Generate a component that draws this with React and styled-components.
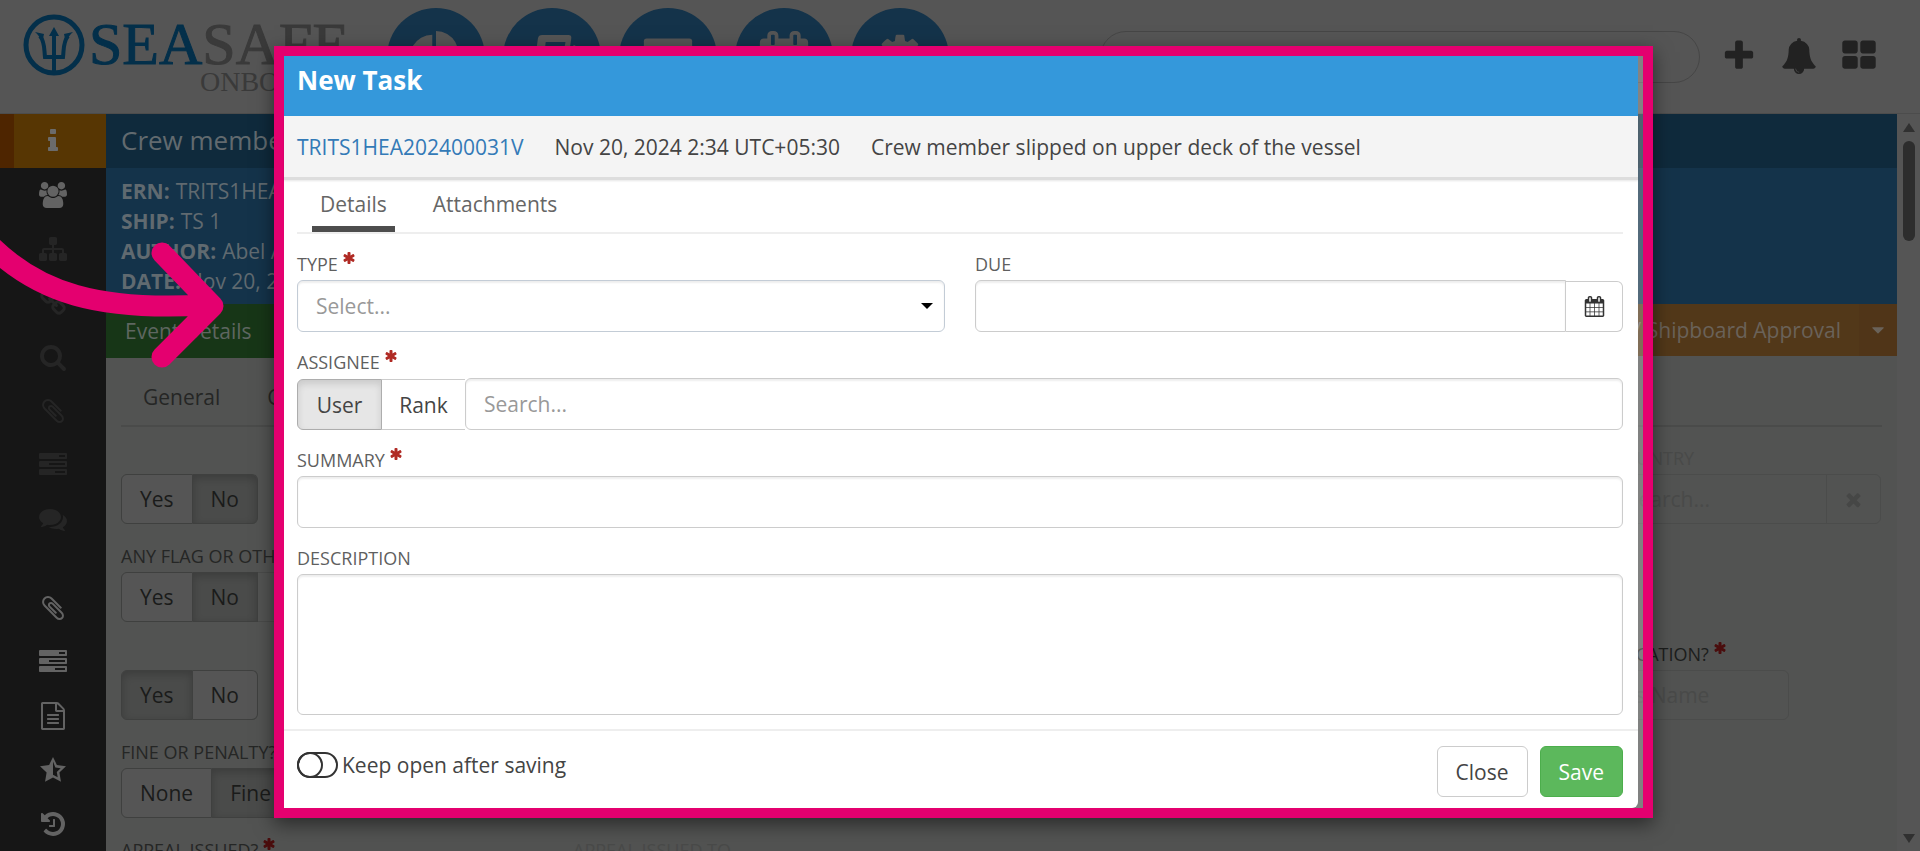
import React from "react";
import styled, { createGlobalStyle, css } from "styled-components";

const PINK = "#e4006f";

const ICONS = {
  info: "M1216 1344v128q0 26-19 45t-45 19h-512q-26 0-45-19t-19-45v-128q0-26 19-45t45-19h64v-384h-64q-26 0-45-19t-19-45v-128q0-26 19-45t45-19h384q26 0 45 19t19 45v576h64q26 0 45 19t19 45zm-128-1152v192q0 26-19 45t-45 19h-256q-26 0-45-19t-19-45v-192q0-26 19-45t45-19h256q26 0 45 19t19 45z",
  users: "M529 896q-162 5-265 128h-134q-82 0-138-40.5t-56-118.5q0-353 124-353 6 0 43.5 21t97.5 42.5 119 21.5q67 0 133-23-5 37-5 66 0 139 81 256zm1071 637q0 120-73 189.5t-194 69.5h-874q-121 0-194-69.5t-73-189.5q0-53 3.5-103.5t14-109 26.500-108.500 43-97.500 62-81 85.500-53.500 111.500-20q10 0 43 21.500t73 48 107 48 135 21.500 135-21.500 107-48 73-48 43-21.500q61 0 111.500 20t85.500 53.500 62 81 43 97.500 26.500 108.500 14 109 3.500 103.500zm-1024-1277q0 106-75 181t-181 75-181-75-75-181 75-181 181-75 181 75 75 181zm704 384q0 159-112.500 271.500t-271.500 112.500-271.500-112.500-112.500-271.500 112.500-271.500 271.500-112.500 271.500 112.500 112.500 271.500zm576 225q0 78-56 118.500t-138 40.500h-134q-103-123-265-128 81-117 81-256 0-29-5-66 66 23 133 23 59 0 119-21.500t97.500-42.500 43.500-21q124 0 124 353zm-128-609q0 106-75 181t-181 75-181-75-75-181 75-181 181-75 181 75 75 181z",
  sitemap: "M1792 1248v320q0 40-28 68t-68 28h-320q-40 0-68-28t-28-68v-320q0-40 28-68t68-28h96v-192h-512v192h96q40 0 68 28t28 68v320q0 40-28 68t-68 28h-320q-40 0-68-28t-28-68v-320q0-40 28-68t68-28h96v-192h-512v192h96q40 0 68 28t28 68v320q0 40-28 68t-68 28h-320q-40 0-68-28t-28-68v-320q0-40 28-68t68-28h96v-192q0-52 38-90t90-38h512v-192h-96q-40 0-68-28t-28-68v-320q0-40 28-68t68-28h320q40 0 68 28t28 68v320q0 40-28 68t-68 28h-96v192h512q52 0 90 38t38 90v192h96q40 0 68 28t28 68z",
  link: "M1520 1216q0-40-28-68l-208-208q-28-28-68-28-42 0-72 32 3 3 19 18.500t21.500 21.500 15 19 13 25.500 3.500 27.500q0 40-28 68t-68 28q-15 0-27.500-3.500t-25.500-13-19-15-21.500-21.500-18.500-19q-33 31-33 73 0 40 28 68l206 207q27 27 68 27 40 0 68-26l147-146q28-28 28-67zm-703-705q0-40-28-68l-206-207q-28-28-68-28-39 0-68 27l-147 146q-28 28-28 67 0 40 28 68l208 208q27 27 68 27 42 0 72-31-3-3-19-18.500t-21.500-21.500-15-19-13-25.500-3.500-27.500q0-40 28-68t68-28q15 0 27.500 3.500t25.500 13 19 15 21.500 21.500 18.500 19q33-31 33-73zm895 705q0 120-85 203l-147 146q-83 83-203 83-121 0-204-85l-206-207q-83-83-83-203 0-123 88-209l-88-88q-86 88-208 88-120 0-204-84l-208-208q-84-84-84-204t85-203l147-146q83-83 203-83 121 0 204 85l206 207q83 83 83 203 0 123-88 209l88 88q86-88 208-88 120 0 204 84l208 208q84 84 84 204z",
  search: "M1216 832q0-185-131.500-316.500t-316.500-131.500-316.500 131.500-131.500 316.500 131.500 316.500 316.500 131.500 316.500-131.500 131.500-316.500zm512 832q0 52-38 90t-90 38q-54 0-90-38l-343-342q-179 124-399 124-143 0-273.500-55.500t-225-150-150-225-55.500-273.500 55.500-273.500 150-225 225-150 273.500-55.500 273.500 55.500 225 150 150 225 55.500 273.500q0 220-124 399l343 343q37 37 37 90z",
  paperclip: "M1596 1385q0 117-79 196t-196 79q-135 0-235-100l-777-776q-113-115-113-271 0-159 110-270t269-111q158 0 273 113l605 606q10 10 10 22 0 16-30.500 46.500t-46.500 30.500q-13 0-23-10l-606-607q-79-77-181-77-106 0-179 75t-73 181q0 105 76 181l776 777q63 63 145 63 64 0 106-42t42-106q0-82-63-145l-581-581q-26-24-60-24-29 0-48 19t-19 48q0 32 25 59l410 410q10 10 10 22 0 16-31 47t-47 31q-12 0-22-10l-410-410q-63-61-63-149 0-82 57-139t139-57q88 0 149 63l581 581q100 98 100 235z",
  tasks: "M1024 1408h640v-128h-640v128zm-384-512h1024v-128h-1024v128zm640-512h384v-128h-384v128zm512 832v256q0 26-19 45t-45 19h-1664q-26 0-45-19t-19-45v-256q0-26 19-45t45-19h1664q26 0 45 19t19 45zm0-512v256q0 26-19 45t-45 19h-1664q-26 0-45-19t-19-45v-256q0-26 19-45t45-19h1664q26 0 45 19t19 45zm0-512v256q0 26-19 45t-45 19h-1664q-26 0-45-19t-19-45v-256q0-26 19-45t45-19h1664q26 0 45 19t19 45z",
  comments: "M1408 768q0 139-94 257t-256.500 186.500-353.500 68.500q-86 0-176-16-124 88-278 128-36 9-86 16h-3q-11 0-20.500-8t-11.500-21q-1-3-1-6.500t.5-6.500 2-6l2.500-5 3.500-5.500 4-5 4.500-5 4-4.500q5-6 23-25t26-29.500 22.500-29 25-38.500 20.500-44q-124-72-195-177t-71-224q0-139 94-257t256.500-186.500 353.500-68.500 353.500 68.500 256.500 186.500 94 257zm384 256q0 120-71 224.500t-195 176.500q10 24 20.500 44t25 38.500 22.500 29 26 29.500 23 25q1 1 4 4.500t4.500 5 4 5 3.500 5.500l2.500 5 2 6 .5 6.500-1 6.500q-3 14-13 22t-22 7q-50-7-86-16-154-40-278-128-90 16-176 16-271 0-472-132 58 4 88 4 161 0 309-45t264-129q125-92 192-212t67-254q0-77-23-152 129 71 204 178t75 230z",
  file: "M1596 380q28 28 48 76t20 88v1152q0 40-28 68t-68 28h-1344q-40 0-68-28t-28-68v-1600q0-40 28-68t68-28h896q40 0 88 20t76 48zm-444-244v376h376q-10-29-22-41l-313-313q-12-12-41-22zm384 1528v-1024h-416q-40 0-68-28t-28-68v-416h-768v1536h1280zm-1024-864q0-14 9-23t23-9h704q14 0 23 9t9 23v64q0 14-9 23t-23 9h-704q-14 0-23-9t-9-23v-64zm736 224q14 0 23 9t9 23v64q0 14-9 23t-23 9h-704q-14 0-23-9t-9-23v-64q0-14 9-23t23-9h704zm0 256q14 0 23 9t9 23v64q0 14-9 23t-23 9h-704q-14 0-23-9t-9-23v-64q0-14 9-23t23-9h704z",
  star: "M896 64l248 504 584 84-422 411 100 580-510-274-510 274 100-580-422-411 584-84zm0 280v862l300 160-58-340 250-242-344-50z",
  history: "M1664 896q0 156-61 298t-164 245-245 164-298 61q-172 0-327-72.500t-264-204.500q-7-10-6.500-22.500t8.500-20.500l137-138q10-9 25-9 16 2 23 12 73 95 179 147t225 52q104 0 198.500-40.500t163.500-109.500 109.500-163.500 40.500-198.500-40.500-198.500-109.500-163.500-163.500-109.500-198.500-40.500q-98 0-188 35.500t-160 101.500l137 138q31 30 14 69-17 40-59 40h-448q-26 0-45-19t-19-45v-448q0-42 40-59 39-17 69 14l130 129q107-101 244.500-156.500t284.500-55.500q156 0 298 61t245 164 164 245 61 298zm-640-288v448q0 14-9 23t-23 9h-320q-14 0-23-9t-9-23v-64q0-14 9-23t23-9h224v-352q0-14 9-23t23-9h64q14 0 23 9t9 23z",
  plus: "M1600 736v192q0 40-28 68t-68 28h-416v416q0 40-28 68t-68 28h-192q-40 0-68-28t-28-68v-416h-416q-40 0-68-28t-28-68v-192q0-40 28-68t68-28h416v-416q0-40 28-68t68-28h192q40 0 68 28t28 68v416h416q40 0 68 28t28 68z",
  bell: "M912 1696q0-16-16-16-59 0-101.500-42.500t-42.500-101.500q0-16-16-16t-16 16q0 73 51.500 124.500t124.500 51.500q16 0 16-16zm816-288q0 52-38 90t-90 38h-448q0 106-75 181t-181 75-181-75-75-181h-448q-52 0-90-38t-38-90q50-42 91-88t85-119.500 74.500-158.500 50-206 19.500-260q0-152 117-282.500t307-158.500q-8-19-8-39 0-40 28-68t68-28 68 28 28 68q0 20-8 39 190 28 307 158.500t117 282.500q0 139 19.500 260t50 206 74.500 158.500 85 119.500 91 88z",
  grid: "M832 1024v384q0 52-38 90t-90 38h-512q-52 0-90-38t-38-90v-384q0-52 38-90t90-38h512q52 0 90 38t38 90zm0-768v384q0 52-38 90t-90 38h-512q-52 0-90-38t-38-90v-384q0-52 38-90t90-38h512q52 0 90 38t38 90zm896 768v384q0 52-38 90t-90 38h-512q-52 0-90-38t-38-90v-384q0-52 38-90t90-38h512q52 0 90 38t38 90zm0-768v384q0 52-38 90t-90 38h-512q-52 0-90-38t-38-90v-384q0-52 38-90t90-38h512q52 0 90 38t38 90z",
  caret: "M1408 704q0 26-19 45l-448 448q-19 19-45 19t-45-19l-448-448q-19-19-19-45t19-45 45-19h896q26 0 45 19t19 45z",
  times: "M1490 1322q0 40-28 68l-136 136q-28 28-68 28t-68-28l-294-294-294 294q-28 28-68 28t-68-28l-136-136q-28-28-28-68t28-68l294-294-294-294q-28-28-28-68t28-68l136-136q28-28 68-28t68 28l294 294 294-294q28-28 68-28t68 28l136 136q28 28 28 68t-28 68l-294 294 294 294q28 28 28 68z",
  asterisk: "M1546 1050q46 26 59.500 77.500t-12.500 97.500l-64 110q-26 46-77.500 59.500t-97.500-12.500l-266-153v307q0 52-38 90t-90 38h-128q-52 0-90-38t-38-90v-307l-266 153q-46 26-97.500 12.500t-77.500-59.500l-64-110q-26-46-12.500-97.500t59.500-77.500l266-154-266-154q-46-26-59.500-77.500t12.500-97.500l64-110q26-46 77.500-59.500t97.500 12.500l266 153v-307q0-52 38-90t90-38h128q52 0 90 38t38 90v307l266-153q46-26 97.500-12.500t77.500 59.500l64 110q26 46 12.500 97.500t-59.500 77.500l-266 154z",
  calendar: "M192 1664h288v-288h-288v288zm352 0h320v-288h-320v288zm-352-352h288v-320h-288v320zm352 0h320v-320h-320v320zm-352-384h288v-288h-288v288zm736 736h320v-288h-320v288zm-384-736h320v-288h-320v288zm768 736h288v-288h-288v288zm-384-352h320v-320h-320v320zm-352-864v-288q0-13-9.500-22.500t-22.500-9.500h-64q-13 0-22.500 9.500t-9.500 22.500v288q0 13 9.500 22.500t22.500 9.500h64q13 0 22.500-9.500t9.500-22.500zm736 864h288v-320h-288v320zm-384-384h320v-288h-320v288zm384 0h288v-288h-288v288zm32-480v-288q0-13-9.500-22.500t-22.500-9.500h-64q-13 0-22.500 9.500t-9.500 22.500v288q0 13 9.500 22.500t22.500 9.500h64q13 0 22.500-9.500t9.500-22.500zm384-64v1280q0 52-38 90t-90 38h-1408q-52 0-90-38t-38-90v-1280q0-52 38-90t90-38h128v-96q0-66 47-113t113-47h64q66 0 113 47t47 113v96h384v-96q0-66 47-113t113-47h64q66 0 113 47t47 113v96h128q52 0 90 38t38 90z",
  pie: "M768 890l546 546q-106 108-247.500 168t-298.500 60q-209 0-385.500-103t-279.500-279.500-103-385.500 103-385.500 279.500-279.500 385.500-103v762zm187 6h773q0 157-60 298.500t-168 247.500zm709-128h-768v-768q209 0 385.500 103t279.500 279.500 103 385.500z",
  book: "M560 138h900q120 0 100 120l-180 1240q-20 130-150 130h-900q-120 0-90-130l170-1240q20-120 150-120zM680 380l-130 1000h640l170-1000zM1640 470l110 60-190 1210h-110z",
  screen: "M160 256h1472q96 0 96 96v1088q0 96-96 96h-1472q-96 0-96-96v-1088q0-96 96-96z",
  cog: "M1152 896q0-106-75-181t-181-75-181 75-75 181 75 181 181 75 181-75 75-181zm512-109v222q0 12-8 23t-20 13l-185 28q-19 54-39 91 35 50 107 138 10 12 10 25t-9 23q-27 37-99 108t-94 71q-12 0-26-9l-138-108q-44 23-91 38-16 136-29 186-7 28-36 28h-222q-14 0-24.500-8.500t-11.500-21.500l-28-184q-49-16-90-37l-141 107q-10 9-25 9-14 0-25-11-126-114-165-168-7-10-7-23 0-12 8-23 15-21 51-66.500t54-70.500q-27-50-41-99l-183-27q-13-2-21-12.500t-8-23.500v-222q0-12 8-23t19-13l186-28q14-46 39-92-40-57-107-138-10-12-10-24 0-10 9-23 26-36 98.500-107.500t94.500-71.500q13 0 26 10l138 107q44-23 91-38 16-136 29-186 7-28 36-28h222q14 0 24.500 8.500t11.500 21.500l28 184q49 16 90 37l142-107q9-9 24-9 13 0 25 10 129 119 165 170 7 8 7 22 0 12-8 23-15 21-51 66.500t-54 70.500q26 50 41 98l183 28q13 2 21 12.500t8 23.500z",
};

function Icon({ name, size, color }) {
  const box = name === "users" ? "-64 0 1920 1792" : "0 0 1792 1792";
  const rule = name === "star" || name === "book" ? "evenodd" : "nonzero";
  return (
    <svg width={size} height={size} viewBox={box} fill={color || "currentColor"} fillRule={rule} aria-hidden="true">
      <path d={ICONS[name]} />
    </svg>
  );
}

const GlobalStyle = createGlobalStyle`
  *, *::before, *::after { box-sizing: border-box; }
  body {
    margin: 0;
    background: #555555;
    color: #444444;
    font-family: "Open Sans", "Noto Sans", sans-serif;
    font-size: 21px;
    line-height: 30px;
  }
  button, input, select, textarea { font: inherit; color: inherit; margin: 0; }
  button { cursor: pointer; }
  svg { display: block; flex: none; }
`;

const Page = styled.div`
  height: 100vh;
  overflow: hidden;
  display: flex;
  flex-direction: column;
`;

/* ---------- top bar ---------- */

const TopBar = styled.header`
  flex: none;
  height: 114px;
  display: flex;
  align-items: flex-start;
  padding: 8px 43px 0 23px;
  background: #555555;
  border-bottom: 1px solid #4c4c4c;
`;

const Logo = styled.div`
  display: flex;
  align-items: flex-start;
  width: 364px;
  padding-top: 6px;
`;

const Wordmark = styled.div`
  padding-left: 4px;
  font-family: "Liberation Serif", serif;
  font-size: 60px;
  line-height: 60px;
  color: #3a3a3a;
  -webkit-text-stroke: 1px currentColor;

  strong { font-weight: 400; color: #032f4a; }
  small {
    display: block;
    padding-left: 111px;
    font-size: 28px;
    line-height: 16px;
    -webkit-text-stroke: 0;
  }
`;

const MainNav = styled.nav`
  display: flex;
  gap: 18px;
`;

const NavCircle = styled.a`
  width: 98px;
  height: 98px;
  border-radius: 50%;
  display: flex;
  align-items: center;
  justify-content: center;
  background: #14334a;
  color: #555555;
`;

const TopTools = styled.div`
  flex: 1;
  display: flex;
  align-items: center;
  justify-content: flex-end;
  gap: 21px;
  height: 98px;
`;

const ToolButtons = styled.div`
  display: flex;
  gap: 24px;
  padding-bottom: 2px;
`;

const TopSearch = styled.input`
  width: 600px;
  height: 52px;
  border: 1px solid #464646;
  border-radius: 26px;
  background: transparent;
`;

const ToolButton = styled.button`
  padding: 0;
  border: 0;
  background: none;
  color: #222222;
`;

/* ---------- page body ---------- */

const Body = styled.div`
  flex: 1;
  min-height: 0;
  display: flex;
`;

const SideBar = styled.nav`
  flex: none;
  width: 106px;
  background: #161616;
`;

const SideLink = styled.a`
  height: 54px;
  display: flex;
  align-items: center;
  justify-content: center;
  margin-top: ${(p) => (p.$gap ? "35px" : "0")};
  color: ${(p) => (p.$faint ? "#252525" : "#636363")};
  ${(p) =>
    p.$active &&
    css`
      background: #573603;
      color: #6b6b6b;
      border-left: 14px solid #4e2500;
      padding-right: 14px;
    `}
`;

const Content = styled.main`
  flex: 1;
  min-width: 0;
  background: #525352;
`;

const EventTitle = styled.h1`
  margin: 0;
  height: 54px;
  padding-left: 15px;
  background: #0f2a3c;
  color: #626a6f;
  font-size: 26px;
  font-weight: 400;
  line-height: 52px;
`;

const EventFacts = styled.dl`
  margin: 0;
  height: 136px;
  padding: 8px 15px;
  background: #14334a;
  color: #606a70;

  div { display: flex; gap: 6px; }
  dt { font-weight: 700; }
  dd { margin: 0; }
`;

const StatusBar = styled.div`
  height: 54px;
  display: flex;
  align-items: flex-start;
  justify-content: space-between;
`;

const StatusButton = styled.button`
  height: ${(p) => (p.$tone === "green" ? "54px" : "52px")};
  padding: 0 ${(p) => (p.$tone === "green" ? "24px" : "18px")} 0 19px;
  border: 0;
  background: ${(p) => (p.$tone === "green" ? "#173617" : "#523819")};
  color: #5e6660;
`;

const StatusSplit = styled.div`
  display: flex;
  color: #6a6259;

  ${StatusButton} { color: inherit; }
  ${StatusButton} + ${StatusButton} {
    width: 38px;
    padding: 0 9px;
    background: #503518;
  }
`;

const PageTabs = styled.div`
  display: flex;
  gap: 47px;
  height: 69px;
  margin: 0 15px;
  padding: 24px 22px 0;
  border-bottom: 2px solid #4a4b4a;
  color: #252625;
`;

const PageTab = styled.a`
  color: inherit;
  text-decoration: none;
`;

const BackForm = styled.form`
  display: flex;
  flex-direction: column;
  gap: 19px;
  padding: 18px 16px 0 15px;
  color: #1a1b1a;
`;

const BackRow = styled.div`
  display: flex;
  justify-content: space-between;
`;

const AppealRow = styled.div`
  display: grid;
  grid-template-columns: 1fr 3fr;
  gap: 16px;
`;

const BackField = styled.div`
  width: ${(p) => p.$width || "auto"};
  margin-right: ${(p) => p.$right || "0"};
`;

const Caption = styled.label`
  display: flex;
  align-items: flex-start;
  gap: 4px;
  height: 29px;
  font-size: 18px;
  line-height: 26px;
  white-space: nowrap;
  color: ${(p) => p.$color || "#5f5f5f"};
`;

const Choice = styled.div`
  display: flex;
`;

const ChoiceButton = styled.button`
  height: 50px;
  padding: 0 18px;
  border: 1px solid #3f403f;
  background: #555555;

  & + & { border-left: 0; }
  &:first-child { border-radius: 6px 0 0 6px; }
  &:last-child { border-radius: 0 6px 6px 0; }
  ${(p) =>
    p.$on &&
    css`
      background: #4a4b4a;
      box-shadow: inset 0 3px 8px rgba(0, 0, 0, 0.2);
    `}
`;

const FaintGroup = styled.div`
  display: flex;
  height: 50px;
  border: 1px solid #4b4c4b;
  border-radius: 6px;
  color: #464746;

  input {
    flex: 1;
    min-width: 0;
    padding: 0 15px;
    border: 0;
    background: none;
  }
  input::placeholder { color: #494a49; opacity: 1; }
  button {
    width: 54px;
    padding: 0 16px;
    border: 0;
    border-left: 1px solid #4b4c4b;
    background: none;
  }
`;

const FlagRemark = styled.input`
  width: 200px;
  height: 50px;
  border: 1px solid #494a49;
  border-left: 0;
  background: none;
`;

const ScrollGutter = styled.div`
  flex: none;
  width: 23px;
  display: flex;
  flex-direction: column;
  align-items: center;
  justify-content: space-between;
  padding: 9px 0 8px;
  color: #303030;
`;

const ScrollTop = styled.div`
  display: flex;
  flex-direction: column;
  align-items: center;
  gap: 9px;
`;

const Thumb = styled.div`
  width: 12px;
  height: 100px;
  border-radius: 6px;
  background: #2d2d2d;
`;

/* ---------- dialog ---------- */

const Overlay = styled.div`
  position: fixed;
  inset: 0;
  padding: 46px 267px 0 274px;
`;

const Highlight = styled.div`
  padding-right: 5px;
  border: 10px solid ${PINK};
  background: rgba(255, 255, 255, 0.27);
  box-shadow: 0 6px 18px rgba(0, 0, 0, 0.5);
`;

const Dialog = styled.section`
  background: #ffffff;
  border-radius: 0 0 6px 0;
`;

const DialogTitle = styled.h2`
  margin: 0;
  height: 60px;
  padding-left: 13px;
  background: #3498db;
  color: #ffffff;
  font-size: 26px;
  font-weight: 700;
  line-height: 48px;
`;

const EventLine = styled.div`
  display: flex;
  align-items: center;
  gap: 31px;
  height: 64px;
  padding-left: 13px;
  border-bottom: 3px solid #dddddd;
  background: #f4f4f4;
  box-shadow: 0 1px 2px rgba(0, 0, 0, 0.1);

  a { color: #337ab7; text-decoration: none; }
`;

const Tabs = styled.div`
  display: flex;
  gap: 30px;
  height: 54px;
  margin: 0 15px 0 13px;
  padding: 0 15px;
  border-bottom: 2px solid #eeeeee;
`;

const Tab = styled.button`
  height: 52px;
  padding: 2px 8px 0;
  border: 0;
  border-bottom: 6px solid ${(p) => (p.$on ? "#4d4d4d" : "transparent")};
  background: none;
  color: #666666;
`;

const Form = styled.form`
  display: flex;
  flex-direction: column;
  gap: 17px;
  padding: 17px 15px 14px 13px;
`;

const Columns = styled.div`
  display: grid;
  grid-template-columns: 1fr 1fr;
  gap: 30px;
`;

const Field = styled.div`
  display: flex;
  flex-direction: column;
`;

const controlLook = css`
  display: block;
  width: 100%;
  height: 52px;
  padding: 0 18px;
  border: 1px solid #cccccc;
  border-radius: 6px;
  background: #ffffff;
  box-shadow: inset 0 2px 2px rgba(0, 0, 0, 0.07);
  outline: none;

  &::placeholder { color: #999999; opacity: 1; }
`;

const TextBox = styled.input`${controlLook}`;

const TextArea = styled.textarea`
  ${controlLook}
  height: 141px;
  resize: none;
`;

const SelectWrap = styled.div`
  display: flex;
  align-items: center;
  position: relative;

  svg { position: absolute; right: 12px; pointer-events: none; }
`;

const Select = styled.select`
  ${controlLook}
  appearance: none;
  border-color: #c3ccd6;
  color: #999999;
`;

const JoinedControls = styled.div`
  display: flex;

  ${TextBox} { flex: 1; width: auto; }
`;

const DueGroup = styled(JoinedControls)`
  ${TextBox} { border-radius: 6px 0 0 6px; }
`;

const CalendarButton = styled.button`
  width: 57px;
  height: 51px;
  margin-top: 1px;
  padding: 0 18px;
  border: 1px solid #cccccc;
  border-left: 0;
  border-radius: 0 6px 6px 0;
  background: #ffffff;
  color: #333333;
`;

const AssigneeButton = styled.button`
  width: ${(p) => (p.$on ? "85px" : "83px")};
  height: 51px;
  margin-top: 1px;
  padding: 0;
  border: 1px solid ${(p) => (p.$on ? "#adadad" : "#cccccc")};
  border-right-width: ${(p) => (p.$on ? "1px" : "0")};
  border-left-width: ${(p) => (p.$on ? "1px" : "0")};
  border-radius: ${(p) => (p.$on ? "6px 0 0 6px" : "0")};
  background: ${(p) => (p.$on ? "#e6e6e6" : "#ffffff")};
  box-shadow: ${(p) => (p.$on ? "inset 0 4px 7px rgba(0, 0, 0, 0.12)" : "none")};
`;

const DialogFooter = styled.footer`
  display: flex;
  align-items: flex-start;
  gap: 12px;
  height: 79px;
  padding: 15px 15px 0 13px;
  border-top: 2px solid #eeeeee;
`;

const KeepOpen = styled.label`
  display: flex;
  align-items: center;
  gap: 4px;
  margin-right: auto;
  padding-top: 4px;
`;

const Switch = styled.input`
  appearance: none;
  width: 41px;
  height: 26px;
  margin: 0;
  border: 2px solid #333333;
  border-radius: 13px;
  background: #ffffff;

  &::before {
    content: "";
    display: block;
    width: 26px;
    height: 26px;
    margin: -2px;
    border: 2px solid #333333;
    border-radius: 50%;
  }
`;

const FooterButton = styled.button`
  height: 51px;
  padding: 0 18px;
  border: 1px solid ${(p) => (p.$primary ? "#4cae4c" : "#cccccc")};
  border-radius: 6px;
  background: ${(p) => (p.$primary ? "#5cb85c" : "#ffffff")};
  color: ${(p) => (p.$primary ? "#ffffff" : "#444444")};
`;

const ArrowMark = styled.svg`
  position: fixed;
  left: 0;
  top: 210px;
  fill: none;
  stroke: ${PINK};
  stroke-width: 21px;
  stroke-linecap: round;
  stroke-linejoin: round;
`;

const Required = ({ dark }) => <Icon name="asterisk" size={14} color={dark ? "#4a0d0d" : "#b02a24"} />;

const SIDE = [
  ["info", "Info", { $active: true }],
  ["users", "People", {}],
  ["sitemap", "Structure", { $faint: true }],
  ["link", "Links", { $faint: true }],
  ["search", "Investigation", { $faint: true }],
  ["paperclip", "Evidence", { $faint: true }],
  ["tasks", "Actions", { $faint: true }],
  ["comments", "Comments", { $faint: true }],
  ["paperclip", "Attachments", { $gap: true }],
  ["tasks", "Tasks", {}],
  ["file", "Reports", {}],
  ["star", "Rating", {}],
  ["history", "History", {}],
];

const NAV = [
  ["pie", "Dashboard"],
  ["book", "Library"],
  ["screen", "Records"],
  ["calendar", "Calendar"],
  ["cog", "Settings"],
];

const FACTS = [
  ["ERN:", "TRITS1HEA202400031V"],
  ["SHIP:", "TS 1"],
  ["AUTHOR:", "Abel Adams"],
  ["DATE:", "Nov 20, 2024 2:34 UTC+05:30"],
];

function YesNo({ options, active, label, children }) {
  return (
    <Choice role="group" aria-label={label}>
      {options.map((o) => (
        <ChoiceButton type="button" key={o} $on={o === active}>{o}</ChoiceButton>
      ))}
      {children}
    </Choice>
  );
}

function Trident() {
  return (
    <svg width="62" height="62" viewBox="0 0 62 62" fill="none" stroke="#032f4a" aria-hidden="true">
      <circle cx="31" cy="31" r="28" strokeWidth="5" />
      <path d="M31 20v38M17 22c5 6 4 13 5 21h18c1-8 0-15 5-21" strokeWidth="4" />
      <path d="M31 13l-5 9h10zM12 18l9 2-2 9q-2-7-7-11zM50 18l-9 2 2 9q2-7 7-11z" fill="#032f4a" stroke="none" />
    </svg>
  );
}

function BackgroundPage() {
  return (
    <Page>
      <TopBar>
        <Logo>
          <Trident />
          <Wordmark>
            <strong>SEA</strong>SAFE
            <small>ONBOARD</small>
          </Wordmark>
        </Logo>
        <MainNav>
          {NAV.map(([icon, label]) => (
            <NavCircle key={icon} href="#" aria-label={label}><Icon name={icon} size={52} /></NavCircle>
          ))}
        </MainNav>
        <TopTools>
          <TopSearch type="search" aria-label="Search" />
          <ToolButtons>
            <ToolButton aria-label="Add"><Icon name="plus" size={36} /></ToolButton>
            <ToolButton aria-label="Notifications"><Icon name="bell" size={36} /></ToolButton>
            <ToolButton aria-label="Apps"><Icon name="grid" size={36} /></ToolButton>
          </ToolButtons>
        </TopTools>
      </TopBar>
      <Body>
        <SideBar>
          {SIDE.map(([icon, label, look]) => (
            <SideLink key={label} href="#" aria-label={label} {...look}><Icon name={icon} size={28} /></SideLink>
          ))}
        </SideBar>
        <Content>
          <EventTitle>Crew member slipped on upper deck of the vessel</EventTitle>
          <EventFacts>
            {FACTS.map(([k, v]) => (
              <div key={k}><dt>{k}</dt><dd>{v}</dd></div>
            ))}
          </EventFacts>
          <StatusBar>
            <StatusButton $tone="green">Event Details</StatusButton>
            <StatusSplit>
              <StatusButton>Review / Shipboard Approval</StatusButton>
              <StatusButton aria-label="More"><Icon name="caret" size={20} /></StatusButton>
            </StatusSplit>
          </StatusBar>
          <PageTabs>
            <PageTab href="#">General</PageTab>
            <PageTab href="#">Crew</PageTab>
          </PageTabs>
          <BackForm>
            <BackRow>
              <BackField>
                <Caption as="div" />
                <YesNo label="Reported" options={["Yes", "No"]} active="No" />
              </BackField>
              <BackField $width="270px">
                <Caption htmlFor="country" $color="#494a49">COUNTRY</Caption>
                <FaintGroup>
                  <input id="country" placeholder="Search..." />
                  <button type="button" aria-label="Clear"><Icon name="times" size={21} /></button>
                </FaintGroup>
              </BackField>
            </BackRow>
            <BackField>
              <Caption as="div" $color="#252625">ANY FLAG OR OTHER</Caption>
              <YesNo label="Any flag or other" options={["Yes", "No"]} active="No">
                <FlagRemark aria-label="Remark" />
              </YesNo>
            </BackField>
            <BackRow>
              <BackField>
                <Caption as="div" />
                <YesNo label="Notified" options={["Yes", "No"]} active="Yes" />
              </BackField>
              <BackField $width="210px" $right="92px">
                <Caption htmlFor="notifier" $color="#1c1d1c">NOTIFICATION? <Required dark /></Caption>
                <FaintGroup><input id="notifier" placeholder="Class Name" /></FaintGroup>
              </BackField>
            </BackRow>
            <BackField>
              <Caption as="div" $color="#252625">FINE OR PENALTY?</Caption>
              <YesNo label="Fine or penalty" options={["None", "Fine", "Penalty"]} active="Fine" />
            </BackField>
            <AppealRow>
              <Caption as="div" $color="#252625">APPEAL ISSUED? <Required dark /></Caption>
              <Caption as="div" $color="#494a49">APPEAL ISSUED TO</Caption>
            </AppealRow>
          </BackForm>
        </Content>
        <ScrollGutter>
          <ScrollTop>
            <svg width="12" height="9" viewBox="0 0 12 9" fill="currentColor"><path d="M6 0l6 9H0z" /></svg>
            <Thumb />
          </ScrollTop>
          <svg width="12" height="9" viewBox="0 0 12 9" fill="currentColor"><path d="M0 0h12L6 9z" /></svg>
        </ScrollGutter>
      </Body>
    </Page>
  );
}

export default function App() {
  return (
    <>
      <GlobalStyle />
      <BackgroundPage />
      <Overlay>
        <Highlight>
          <Dialog role="dialog" aria-labelledby="dialog-title">
            <DialogTitle id="dialog-title">New Task</DialogTitle>
            <EventLine>
              <a href="#">TRITS1HEA202400031V</a>
              <span>Nov 20, 2024 2:34 UTC+05:30</span>
              <span>Crew member slipped on upper deck of the vessel</span>
            </EventLine>
            <Tabs>
              <Tab $on>Details</Tab>
              <Tab>Attachments</Tab>
            </Tabs>
            <Form>
              <Columns>
                <Field>
                  <Caption htmlFor="type">TYPE <Required /></Caption>
                  <SelectWrap>
                    <Select id="type" defaultValue=""><option value="">Select...</option></Select>
                    <svg width="12" height="6" viewBox="0 0 12 6" fill="#000000"><path d="M0 0h12L6 6z" /></svg>
                  </SelectWrap>
                </Field>
                <Field>
                  <Caption htmlFor="due">DUE</Caption>
                  <DueGroup>
                    <TextBox id="due" />
                    <CalendarButton type="button" aria-label="Pick a date"><Icon name="calendar" size={21} /></CalendarButton>
                  </DueGroup>
                </Field>
              </Columns>
              <Field>
                <Caption htmlFor="assignee">ASSIGNEE <Required /></Caption>
                <JoinedControls>
                  <AssigneeButton type="button" $on>User</AssigneeButton>
                  <AssigneeButton type="button">Rank</AssigneeButton>
                  <TextBox id="assignee" placeholder="Search..." />
                </JoinedControls>
              </Field>
              <Field>
                <Caption htmlFor="summary">SUMMARY <Required /></Caption>
                <TextBox id="summary" />
              </Field>
              <Field>
                <Caption htmlFor="description">DESCRIPTION</Caption>
                <TextArea id="description" />
              </Field>
            </Form>
            <DialogFooter>
              <KeepOpen>
                <Switch type="checkbox" />
                Keep open after saving
              </KeepOpen>
              <FooterButton type="button">Close</FooterButton>
              <FooterButton type="button" $primary>Save</FooterButton>
            </DialogFooter>
          </Dialog>
        </Highlight>
      </Overlay>
      <ArrowMark width="240" height="170" viewBox="0 0 240 170" aria-hidden="true">
        <path d="M-12 33C38 84 100 101 205 95M162 43l51 53-51 51" />
      </ArrowMark>
    </>
  );
}
